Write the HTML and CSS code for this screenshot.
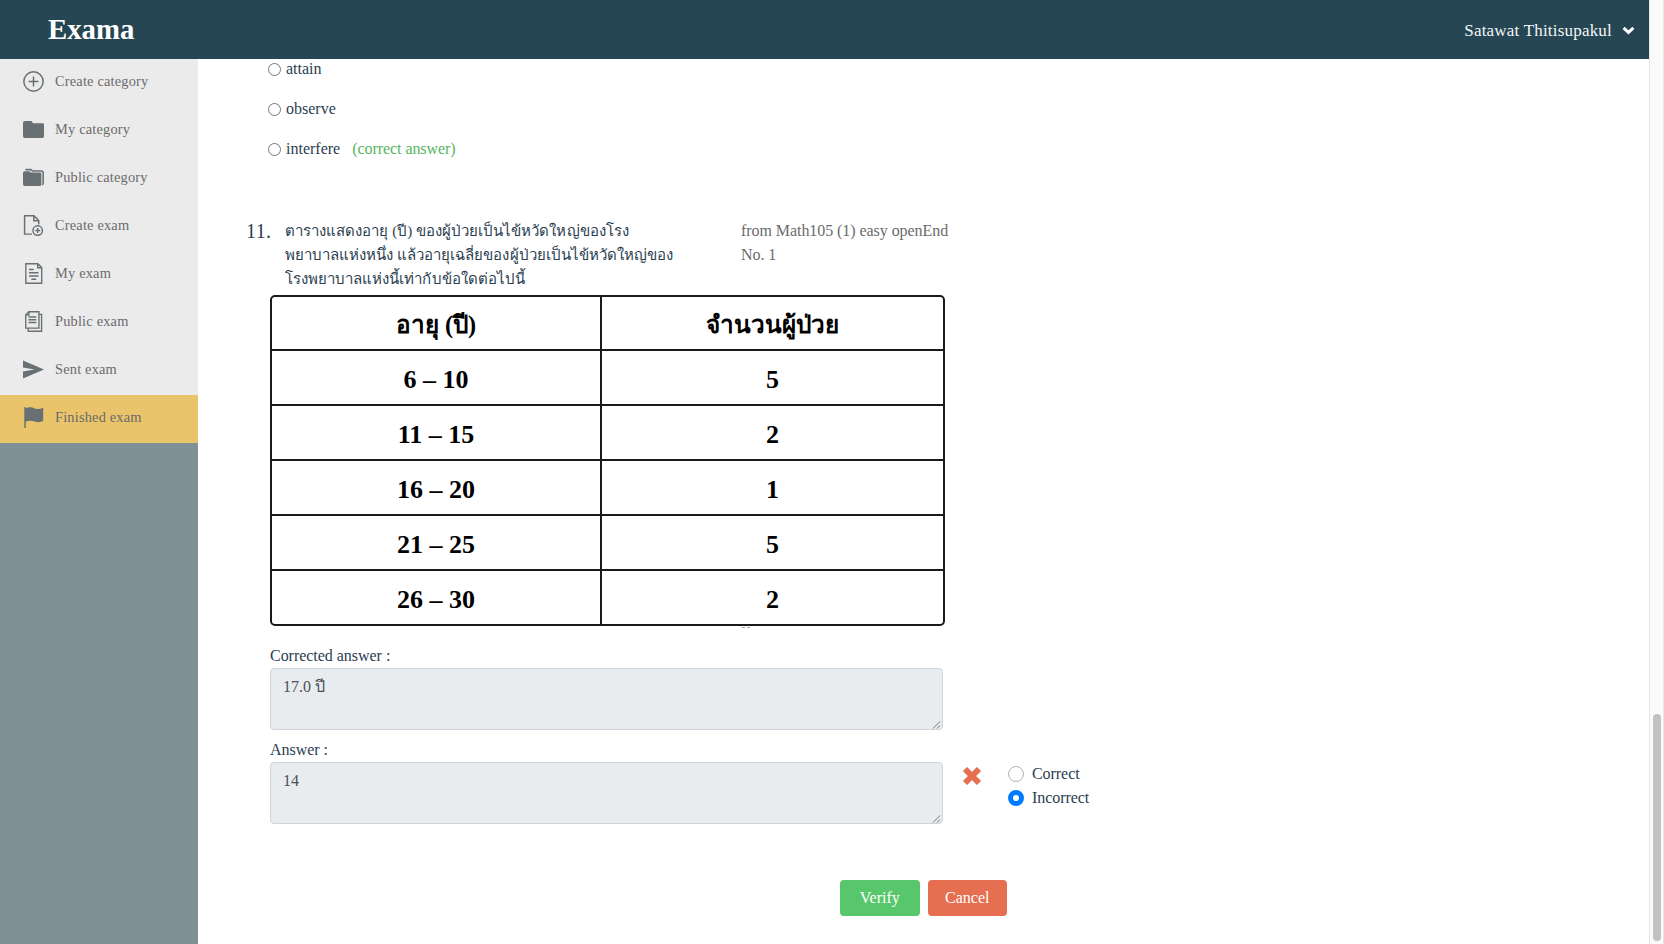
FILE: index.html
```html
<!DOCTYPE html>
<html lang="en">
<head>
<meta charset="utf-8">
<title>Exama</title>
<link rel="stylesheet" href="styles.css">
</head>
<body>
<div class="page">
  <header class="topbar">
    <div class="brand">Exama</div>
    <div class="user"><span class="user-name">Satawat Thitisupakul</span>
      <svg class="chev" viewBox="0 0 13 9"><path d="M1.6 1.8 6.5 6.4 11.4 1.8" fill="none" stroke="#fff" stroke-width="3"/></svg>
    </div>
  </header>
  <div class="body">
    <nav class="side">
      <a class="item"><svg class="ico" viewBox="0 0 20 20"><g fill="none" stroke="#697074" stroke-width="1.4"><circle cx="10" cy="10" r="9.2"/><path d="M10 5.3v9.4M5.3 10h9.4"/></g></svg><span>Create category</span></a>
      <a class="item"><svg class="ico" viewBox="0 0 20 20"><path fill="#697074" d="M0 3.5Q0 2 1.500 2H8l1.600 2h9Q20 4 20 5.400v11.200Q20 18 18.500 18h-17Q0 18 0 16.500z"/></svg><span>My category</span></a>
      <a class="item"><svg class="ico" viewBox="0 0 20 20"><path fill="#697074" d="M0 5.500Q0 4 1.500 4H6l1.400 1.300h8.800q1.300 0 1.300 1.300V16.700q0 1.300-1.300 1.300H1.500Q0 18 0 16.500z"/><path fill="none" stroke="#697074" stroke-width="1.500" d="M2.500 3Q2.700 2.500 3.500 2.500H7.500L9 3.800h8.500q1.700 0 1.700 1.700V15q0 1.500-1 2"/></svg><span>Public category</span></a>
      <a class="item"><svg class="ico" viewBox="0 0 20 20"><g fill="none" stroke="#697074" stroke-width="1.400"><path d="M8.500 18.200H1.500V.800h9l4.500 4.500V9M10.300.800v4.700H15"/><circle cx="14" cy="14.800" r="4.500"/><path d="M14 12.400v4.800M11.600 14.800h4.800"/></g></svg><span>Create exam</span></a>
      <a class="item"><svg class="ico" viewBox="0 0 20 20"><g fill="none" stroke="#697074" stroke-width="1.300"><path d="M2.700.700h11.500l3.600 3.600v15H2.700zM14 .700v3.800h3.800M5.700 6.200h4.500M5.700 9.300h9M5.700 12.400h9M8 15.500h4.500"/></g></svg><span>My exam</span></a>
      <a class="item"><svg class="ico" viewBox="0 0 20 20"><g fill="none" stroke="#697074" stroke-width="1.300"><path d="M5.500.700h9.700v15.600H2.600V3.600zM5.700.700v3.200H2.600M15.200 3.200h2.500v16.100H5v-3M5.200 5.700h7.500M5.200 8.300h7.500M5.200 10.900h7.500"/></g></svg><span>Public exam</span></a>
      <a class="item"><svg class="ico" viewBox="0 0 20 20"><path fill="#697074" d="M0 1.500 20 10 0 18.500V12l11-2L0 8z"/></svg><span>Sent exam</span></a>
      <a class="item active"><svg class="ico" viewBox="0 0 20 20"><path fill="#697074" d="M1.200 0h1.400v1.200c4-1.600 6.400-.600 8.600.200 2.800.900 5 .700 8-.600v12.600c-3 1.300-5.400 1.300-8.200.400-2.700-.900-5-1.300-8.400.200v6H1.200z"/></svg><span>Finished exam</span></a>
    </nav>
    <main class="main">
      <ul class="choices">
        <li><i class="dot"></i>attain</li>
        <li><i class="dot"></i>observe</li>
        <li><i class="dot"></i>interfere<span class="ok">(correct answer)</span></li>
      </ul>
      <section class="question">
        <div class="q-no">11.</div>
        <div class="q-text">
          <div>ตารางแสดงอายุ (ปี) ของผู้ป่วยเป็นไข้หวัดใหญ่ของโรง</div>
          <div>พยาบาลแห่งหนึ่ง แล้วอายุเฉลี่ยของผู้ป่วยเป็นไข้หวัดใหญ่ของ</div>
          <div>โรงพยาบาลแห่งนี้เท่ากับข้อใดต่อไปนี้</div>
        </div>
        <div class="q-from">from Math105 (1) easy openEnd No. 1</div>
      </section>
      <div class="grid">
        <div class="th">อายุ (ปี)</div><div class="th">จำนวนผู้ป่วย</div>
        <div>6 – 10</div><div>5</div>
        <div>11 – 15</div><div>2</div>
        <div>16 – 20</div><div>1</div>
        <div>21 – 25</div><div>5</div>
        <div>26 – 30</div><div>2</div>
      </div>
      <div class="specks"></div>
      <div class="label">Corrected answer :</div>
      <div class="box">17.0 ปี<svg class="grip" viewBox="0 0 9 9"><path d="M1 8.500 8 1.500M5 8.500 8 5.500" stroke="#777" fill="none"/></svg></div>
      <div class="label second">Answer :</div>
      <div class="row">
        <div class="box">14<svg class="grip" viewBox="0 0 9 9"><path d="M1 8.500 8 1.500M5 8.500 8 5.500" stroke="#777" fill="none"/></svg></div>
        <svg class="cross" viewBox="0 0 20 20"><path d="M3 3 17 17M17 3 3 17" stroke="#e76f51" stroke-width="6" stroke-linecap="butt"/></svg>
        <div class="marks">
          <div><i class="radio"></i>Correct</div>
          <div><i class="radio on"></i>Incorrect</div>
        </div>
      </div>
      <div class="actions"><button class="btn verify">Verify</button><button class="btn cancel">Cancel</button></div>
    </main>
  </div>
</div>
<div class="scroll"><div class="thumb"></div></div>
</body>
</html>
```
FILE: styles.css
```css
* { box-sizing: border-box; }
body { margin: 0; height: 944px; overflow: hidden; display: flex; background: #fff; color: #2c3e50; font: 16px/24px "Liberation Serif", serif; }
.page { width: 1649px; height: 944px; display: flex; flex-direction: column; }
.topbar { height: 59px; background: #264653; color: #fff; display: flex; align-items: center; justify-content: space-between; padding: 0 14px 0 48px; }
.brand { font-size: 28.8px; font-weight: bold; padding-bottom: 2px; }
.user { display: flex; align-items: center; gap: 10px; padding-top: 2px; }
.user-name { font-size: 17px; letter-spacing: 0.2px; color: #f4f6f7; }
.chev { width: 13px; height: 9px; margin-bottom: 1px; }
.body { flex: 1; display: flex; }
.side { width: 198px; background: #7f9197; }
.item { display: flex; align-items: center; height: 48px; padding-left: 23px; padding-bottom: 4px; gap: 11px; background: #ebebeb; color: #6b6b6b; font-size: 14.4px; letter-spacing: 0.18px; }
.item.active { background: #e9c46a; }
.ico { width: 21px; height: 21px; }
.main { flex: 1; padding-left: 72px; }
.choices { list-style: none; margin: 0; padding: 0; height: 160px; }
.choices li { display: flex; align-items: center; height: 40px; position: relative; top: -10px; }
.dot { width: 13px; height: 13px; margin: 0 5px 0 -2px; border: 1px solid #767676; border-radius: 50%; }
.ok { color: #55b560; margin-left: 12px; letter-spacing: -0.06px; }
.question { display: flex; height: 76px; margin-left: -24px; }
.q-no { width: 39px; font-size: 20px; line-height: 24px; letter-spacing: 0.4px; }
.q-text { width: 456px; white-space: nowrap; font-size: 15px; letter-spacing: 0.03px; }
.q-text div { height: 24px; }
.q-from { width: 220px; color: #6b6b6b; letter-spacing: -0.06px; }
.grid { width: 675px; height: 331px; display: grid; grid-template-columns: 330px 1fr; grid-template-rows: 54px repeat(4, 55px) 1fr; border: 2px solid #1a1a1a; border-radius: 5px; color: #000; font-weight: bold; font-size: 26px; }
.grid div { display: flex; align-items: center; justify-content: center; border-bottom: 2px solid #1a1a1a; padding-top: 4px; }
.grid div:nth-child(odd) { border-right: 2px solid #1a1a1a; }
.grid div:nth-last-child(-n+2) { border-bottom: 0; }
.grid .th { font-size: 24.3px; padding-top: 3px; }
.specks { width: 8px; height: 1px; margin: 1px 0 0 472px; background: linear-gradient(90deg, #aaa 3px, transparent 3px 5px, #aaa 5px); }
.label { height: 24px; margin-top: 16px; letter-spacing: -0.03px; }
.label.second { margin-top: 8px; }
.box { position: relative; width: 673px; height: 62px; padding: 6px 12px; background: #e9ecef; border: 1px solid #ced4da; border-radius: 4px; color: #495057; }
.grip { position: absolute; right: 1px; bottom: 0; width: 9px; height: 9px; }
.row { display: flex; }
.cross { width: 20px; height: 20px; margin: 4px 0 0 19px; }
.marks { margin-left: 26px; letter-spacing: -0.06px; }
.marks div { display: flex; align-items: center; gap: 8px; height: 24px; }
.radio { width: 16px; height: 16px; border: 1px solid #adb5bd; border-radius: 50%; background: #fff; }
.radio.on { border: 5px solid #007bff; }
.actions { display: flex; gap: 8px; margin: 56px 0 0 570px; }
.btn { width: 79.500px; height: 36px; border: 0; border-radius: 4px; color: #fff; font: 16px "Liberation Serif", serif; }
.verify { background: #58c76b; }
.cancel { background: #e76f51; }
.scroll { width: 15px; height: 944px; background: #fafafa; border: solid #e6e6e6; border-width: 0 1px; padding: 714px 0 0 3px; }
.thumb { width: 8px; height: 227px; border-radius: 4px; background: #c1c1c1; }
```
